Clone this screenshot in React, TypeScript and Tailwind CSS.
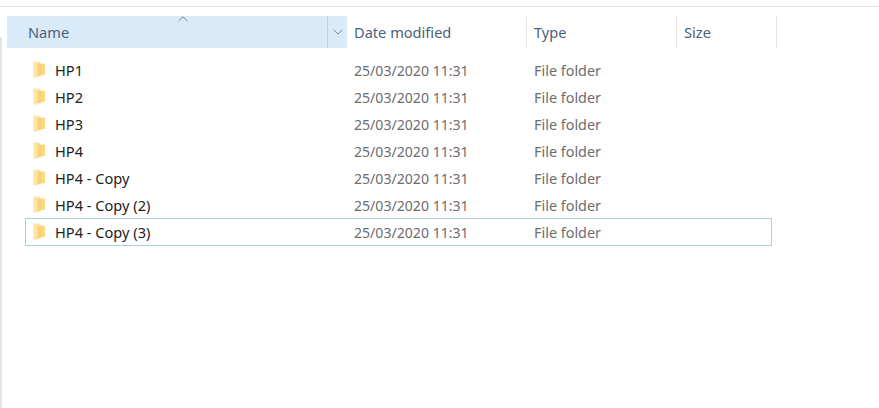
const rows = ["HP1", "HP2", "HP3", "HP4", "HP4 - Copy", "HP4 - Copy (2)", "HP4 - Copy (3)"];

function Folder() {
  return (
    <svg width="14" height="18" viewBox="0 0 14 18" className="shrink-0 blur-[0.4px]">
      <path d="M1.5 0.5 H7.5 L8.5 2.5 H13 V14 H9.5 L5 16.5 H1.5 Z" fill="#fde5a8" />
      <path d="M5.5 2.5 L10.5 3 V14 L5.5 15.5 Z" fill="#f9d272" />
      <path d="M10.5 3 H13 V14 H10.5 Z" fill="#fbd981" />
    </svg>
  );
}

export default function App() {
  return (
    <div className="w-[879px] h-[408px] bg-white overflow-hidden flex flex-col font-['Noto_Sans','Open_Sans',sans-serif] text-[14px]">
      <div className="h-[7px] shrink-0 border-b border-[#e3e3e3]" />
      <div className="flex flex-1 min-h-0">
        <div className="w-[2px] mt-[30px] shrink-0 bg-[#e5e5e5]" />
        <div className="flex-1 pl-[5px] pt-[9px] min-w-0">
          <div className="flex h-[32px] text-[#4c607a] text-[14.6px]">
            <div className="relative w-[340px] flex bg-[#d9ebf9]">
              <span className="flex-1 pl-[21px] leading-[32px]">Name</span>
              <svg width="10" height="6" viewBox="0 0 10 6" className="absolute left-[171px] top-0" fill="none" stroke="#7d8a9a" strokeWidth="1">
                <path d="M0.5 5 L5 0.8 L9.5 5" />
              </svg>
              <div className="w-[20px] border-l border-[#bcd3e6] flex items-center justify-center">
                <svg width="10" height="6" viewBox="0 0 10 6" fill="none" stroke="#7d8a9a" strokeWidth="1">
                  <path d="M0.5 0.8 L5 5 L9.5 0.8" />
                </svg>
              </div>
            </div>
            <div className="w-[180px] pl-[7px] leading-[32px] border-r border-[#e5e5e5]">Date modified</div>
            <div className="w-[150px] pl-[7px] leading-[32px] border-r border-[#e5e5e5]">Type</div>
            <div className="w-[100px] pl-[7px] leading-[32px] border-r border-[#e5e5e5]">Size</div>
          </div>
          <div className="pt-[9px] pl-[18px] flex flex-col">
            {rows.map((name, i) => (
              <div
                key={name}
                className={
                  "flex items-center w-[747px] border " +
                  (i === rows.length - 1 ? "border-[#a9d2dc] h-[28px] -mt-[1px] pt-[1px]" : "border-transparent h-[27px]")
                }
              >
                <div className="w-[328px] pl-[6px] flex items-center gap-[9px] text-[#222222] text-[14.6px]">
                  <Folder />
                  <span>{name}</span>
                </div>
                <div className="w-[180px] text-[#6d6d6d] text-[14.1px]">25/03/2020 11:31</div>
                <div className="text-[#6d6d6d] text-[14.4px]">File folder</div>
              </div>
            ))}
          </div>
        </div>
      </div>
    </div>
  );
}
